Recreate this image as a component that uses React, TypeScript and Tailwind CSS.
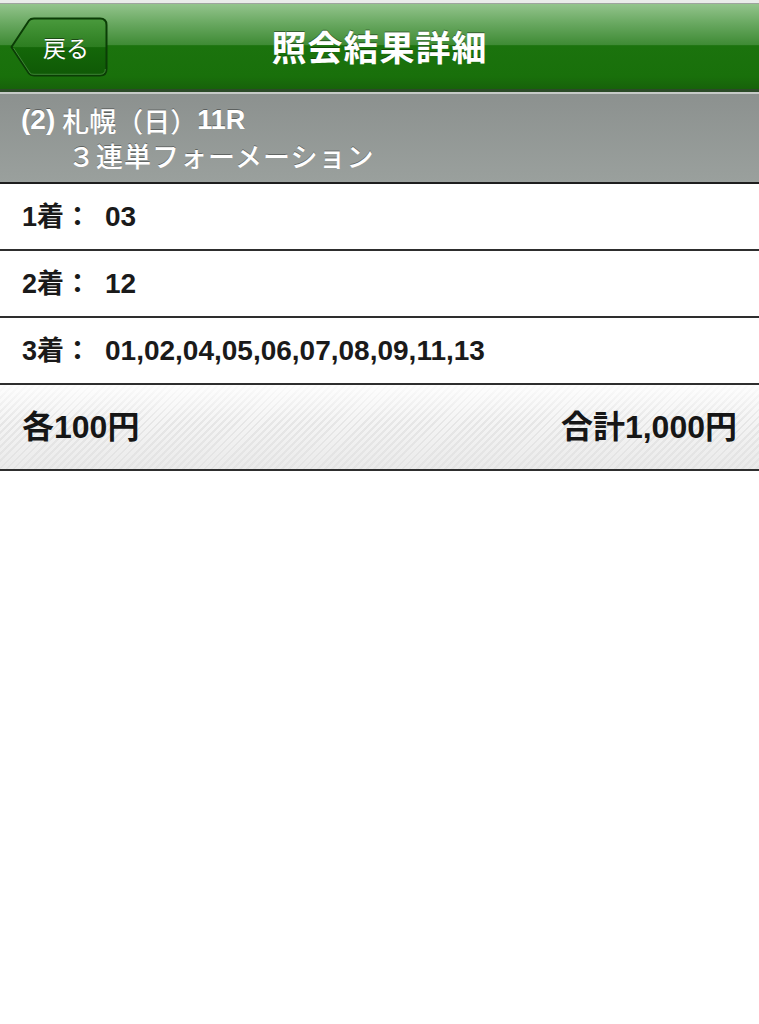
export default function App() {
  const rows = [
    { label: "1着", value: "03" },
    { label: "2着", value: "12" },
    { label: "3着", value: "01,02,04,05,06,07,08,09,11,13" },
  ];

  return (
    <div className="w-[759px] min-h-[1024px] bg-white font-['Liberation_Sans','Noto_Sans_CJK_JP',sans-serif]">
      <div className="h-[4px] bg-[#e9ece9] border-b border-[#9ea49e]" />

      {/* nav bar */}
      <div className="relative h-[88px] flex items-center justify-center bg-[linear-gradient(to_bottom,#93c48c_0%,#6aa962_22%,#3f8b35_48%,#1b730d_49%,#19700b_85%,#17620a_100%)] border-b-[3px] border-[#2b4a27]">
        <button className="absolute left-[10px] top-[13px] w-[98px] h-[60px] flex items-center justify-center pl-[14px]">
          <svg className="absolute inset-0" width="98" height="60" viewBox="0 0 98 60">
            <defs>
              <linearGradient id="bb" x1="0" y1="0" x2="0" y2="1">
                <stop offset="0" stopColor="#4a9a3d" />
                <stop offset="0.5" stopColor="#2c7d20" />
                <stop offset="0.51" stopColor="#146709" />
                <stop offset="1" stopColor="#0f5906" />
              </linearGradient>
            </defs>
            <path
              d="M1.5 30 L19 3.5 Q20.5 1.5 24 1.5 L90 1.5 Q96.5 1.5 96.5 8 L96.5 52 Q96.5 58.5 90 58.5 L24 58.5 Q20.5 58.5 19 56.5 Z"
              fill="url(#bb)"
              stroke="#0b3d06"
              strokeWidth="2"
            />
            <path
              d="M3.5 31 L20 56 Q21 57.3 24 57.3 L90 57.3 Q95.3 57.3 95.3 52"
              fill="none"
              stroke="#5fa654"
              strokeOpacity="0.6"
              strokeWidth="1"
            />
          </svg>
          <span className="relative text-white text-[23px] leading-none font-['Noto_Sans_CJK_JP',sans-serif] [text-shadow:0_-1px_0_rgba(0,0,0,0.45)]">
            戻る
          </span>
        </button>
        <h1 className="text-white text-[35px] font-bold tracking-[1px] font-['Noto_Sans_CJK_JP',sans-serif] [text-shadow:0_-1px_0_rgba(0,0,0,0.4)]">
          照会結果詳細
        </h1>
      </div>

      {/* race info */}
      <div className="h-[92px] border-t-2 border-[#c6cac7] border-b-2 border-b-[#1e1e1e] bg-[linear-gradient(to_bottom,#8c918f,#9aa09d)] px-[21px] pt-[9px] text-white [text-shadow:0_-1px_0_rgba(0,0,0,0.35)]">
        <div className="flex items-center h-[34px] text-[27px] font-bold leading-none">
          <span className="mr-[7px] text-[28px]">(2)</span>
          <span className="font-['Noto_Sans_CJK_JP',sans-serif] text-[27px] font-medium">札幌（日）</span>
          <span>11R</span>
        </div>
        <div className="pl-[47px] h-[37px] flex items-center text-[27px] leading-none font-medium font-['Noto_Sans_CJK_JP',sans-serif] tracking-[1px]">
          ３連単フォーメーション
        </div>
      </div>

      {rows.map((r) => (
        <div
          key={r.label}
          className="h-[67px] flex items-center px-[22px] border-b-2 border-[#2e2e2e] text-[28px] font-bold text-[#1a1a1a]"
        >
          <span className="w-[83px] shrink-0 text-[27px]">
            {r.label}
            <span className="font-['Noto_Sans_CJK_JP',sans-serif]">：</span>
          </span>
          <span className="text-[28px]">{r.value}</span>
        </div>
      ))}

      {/* totals */}
      <div className="h-[86px] flex items-center justify-between px-[22px] border-b-2 border-[#2e2e2e] bg-[linear-gradient(to_bottom,rgba(255,255,255,0.85),rgba(255,255,255,0)_45%,rgba(225,225,225,0.5)),repeating-linear-gradient(135deg,#f4f4f4_0px,#f4f4f4_3px,#e6e6e6_3px,#e6e6e6_5px)] text-[32px] font-bold text-[#161616]">
        <span>各100円</span>
        <span>合計1,000円</span>
      </div>
    </div>
  );
}
